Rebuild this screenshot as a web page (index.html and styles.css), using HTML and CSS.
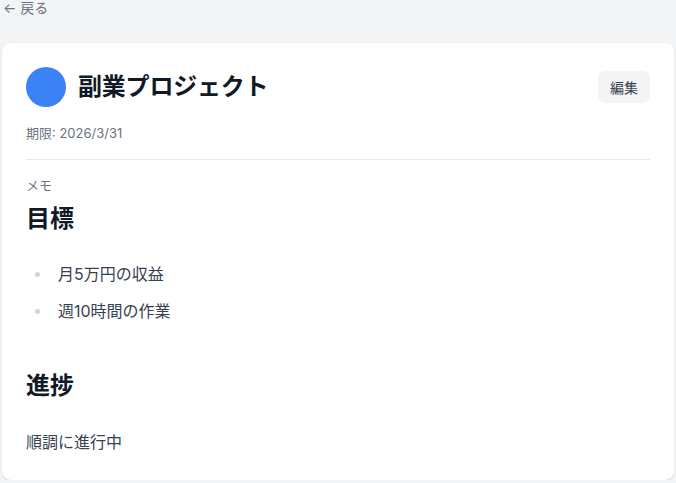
FILE: index.html
```html
<!DOCTYPE html>
<html lang="ja">
<head>
<meta charset="utf-8">
<link rel="stylesheet" href="styles.css">
</head>
<body>
<div class="page">
  <a class="back">← 戻る</a>
  <div class="card">
    <div class="header">
      <div class="title-wrap">
        <span class="dot"></span>
        <h1 class="title">副業プロジェクト</h1>
      </div>
      <button class="edit">編集</button>
    </div>
    <div class="due">期限: 2026/3/31</div>
    <div class="memo-label">メモ</div>
    <div class="memo">
      <h2 class="h">目標</h2>
      <ul class="list">
        <li>月5万円の収益</li>
        <li>週10時間の作業</li>
      </ul>
      <h2 class="h h-second">進捗</h2>
      <p class="para">順調に進行中</p>
    </div>
  </div>
</div>
</body>
</html>
```
FILE: styles.css
```css
html, body { margin: 0; padding: 0; }
body {
  background: #f3f4f6;
  font-family: Inter, "Noto Sans CJK JP", "Noto Sans", sans-serif;
  color: #111827;
}
.page { padding: 0 2px 0 2px; }
.back {
  display: block;
  font-size: 14px;
  line-height: 15px;
  color: #6b7280;
  padding-left: 1px;
}
.card {
  margin-top: 28px;
  background: #fff;
  border-radius: 9px;
  box-shadow: 0 1px 3px rgba(0,0,0,0.08), 0 1px 2px rgba(0,0,0,0.04);
  padding: 24px 24px 26px 24px;
}
.header {
  display: flex;
  align-items: flex-start;
  justify-content: space-between;
}
.title-wrap { display: flex; align-items: center; gap: 12px; }
.dot { width: 40px; height: 40px; border-radius: 50%; background: #3b82f6; display: block; }
.title { margin: 0; font-size: 24px; line-height: 40px; font-weight: 700; color: #111827; letter-spacing: -0.2px; }
.edit {
  margin-top: 4px;
  height: 32px;
  padding: 0 12px;
  border: 0;
  border-radius: 7px;
  background: #f3f4f6;
  color: #374151;
  font-family: inherit;
  font-size: 14px;
}
.due {
  margin-top: 16px;
  font-size: 13px;
  line-height: 20px;
  color: #6b7280;
  padding-bottom: 16px;
  border-bottom: 1px solid #e5e7eb;
}
.memo-label {
  margin-top: 15px;
  font-size: 13px;
  line-height: 20px;
  color: #6b7280;
}
.h { margin: 8px 0 0; font-size: 24px; line-height: 32px; font-weight: 700; color: #111827; }
.h-second { margin-top: 47px; }
.list { list-style: none; margin: 27px 0 0; padding: 0; }
.list li {
  position: relative;
  padding-left: 32px;
  font-size: 16px;
  line-height: 24px;
  color: #374151;
}
.list li + li { margin-top: 13px; }
.list li::before {
  content: "";
  position: absolute;
  left: 9px;
  top: 10px;
  width: 5px;
  height: 5px;
  border-radius: 50%;
  background: #d1d5db;
}
.para { margin: 28px 0 0; font-size: 16px; line-height: 24px; color: #374151; }
```
